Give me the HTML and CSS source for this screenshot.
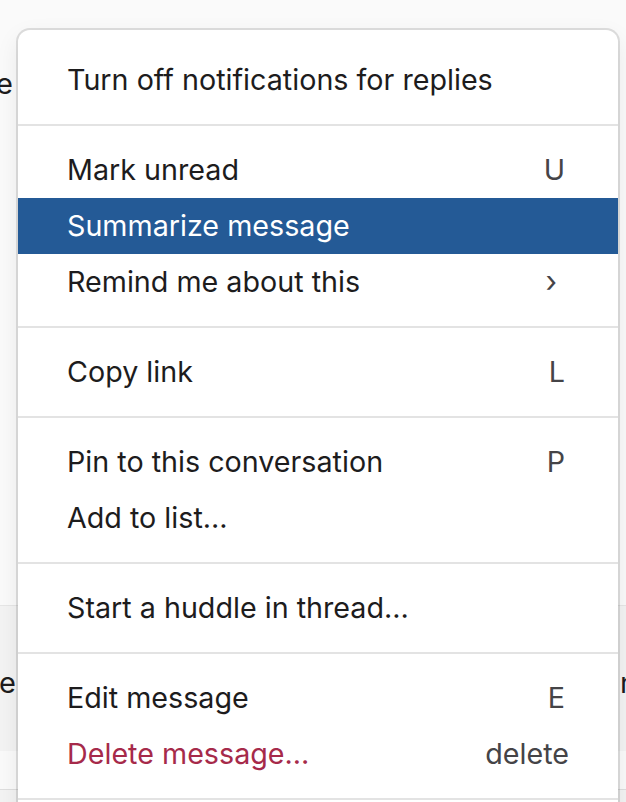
FILE: index.html
```html
<!DOCTYPE html>
<html lang="en">
<head>
<meta charset="utf-8">
<title>Message menu</title>
<link rel="stylesheet" href="styles.css">
</head>
<body>
<div class="page">
  <div class="bg-top">
    <div class="bg-line bg-line-1"><span class="clip">message</span></div>
  </div>
  <div class="bg-band">
    <div class="clip-left"><span>Some name</span></div>
    <div class="clip-right"><span>n</span></div>
  </div>
  <div class="bg-gap"></div>
  <div class="bg-bottom"></div>

  <div class="menu" role="menu">
    <div class="item"><span class="label">Turn off notifications for replies</span></div>
    <div class="sep"></div>
    <div class="item"><span class="label">Mark unread</span><span class="key letter">U</span></div>
    <div class="item active"><span class="label">Summarize message</span></div>
    <div class="item"><span class="label">Remind me about this</span><span class="key chev">›</span></div>
    <div class="sep"></div>
    <div class="item"><span class="label">Copy link</span><span class="key letter">L</span></div>
    <div class="sep"></div>
    <div class="item"><span class="label">Pin to this conversation</span><span class="key letter">P</span></div>
    <div class="item"><span class="label">Add to list…</span></div>
    <div class="sep"></div>
    <div class="item"><span class="label">Start a huddle in thread…</span></div>
    <div class="sep"></div>
    <div class="item"><span class="label">Edit message</span><span class="key letter">E</span></div>
    <div class="item danger"><span class="label">Delete message…</span><span class="key">delete</span></div>
    <div class="sep"></div>
    <div class="item"><span class="label">More message shortcuts…</span></div>
  </div>
</div>
</body>
</html>
```
FILE: styles.css
```css
html, body {
  margin: 0;
  padding: 0;
  width: 626px;
  height: 802px;
  overflow: hidden;
  background: #fafafa;
  font-family: Inter, "Noto Sans", "Liberation Sans", sans-serif;
  color: #1d1c1d;
}

.page {
  position: relative;
  width: 626px;
  height: 802px;
  display: flex;
  flex-direction: column;
}

.bg-top {
  height: 606px;
  background: #fafafa;
  border-bottom: 1px solid #e6e6e6;
  padding-top: 56px;
  box-sizing: border-box;
}

.bg-line {
  width: 13px;
  overflow: hidden;
  direction: rtl;
  white-space: nowrap;
  font-size: 29px;
  line-height: 56px;
}

.bg-band {
  height: 145px;
  background: #f3f3f3;
  display: flex;
  justify-content: space-between;
  align-items: center;
  padding-top: 8px;
  box-sizing: border-box;
  font-size: 29px;
}

.clip-left {
  width: 16px;
  overflow: hidden;
  direction: rtl;
  white-space: nowrap;
  padding-right: 0;
}

.clip-left span {
  padding-left: 0;
}

.clip-right {
  width: 6px;
  overflow: hidden;
  white-space: nowrap;
}

.bg-gap {
  height: 38px;
  background: #fafafa;
  border-bottom: 1px solid #dedede;
}

.bg-bottom {
  flex: 1;
  background: #f3f3f3;
}

.menu {
  position: absolute;
  left: 18px;
  top: 30px;
  width: 600px;
  padding: 22px 0 24px;
  background: #ffffff;
  border-radius: 12px;
  box-shadow: 0 0 0 2px rgba(29, 28, 29, 0.13), 0 8px 24px rgba(0, 0, 0, 0.08);
}

.item {
  height: 56px;
  display: flex;
  align-items: center;
  justify-content: space-between;
  padding: 0 49px 2px 49px;
  box-sizing: border-box;
  font-size: 28.7px;
  white-space: nowrap;
}

.item.active {
  background: #245a96;
  color: #ffffff;
}

.item.danger .label {
  color: #a62a4a;
}

.key {
  color: #454447;
  font-size: 28.7px;
}

.key.letter {
  padding-right: 4px;
}

.key.chev {
  font-size: 30px;
  padding-right: 12px;
}

.sep {
  height: 2px;
  background: #e3e3e3;
  margin: 16px 0;
}
```
